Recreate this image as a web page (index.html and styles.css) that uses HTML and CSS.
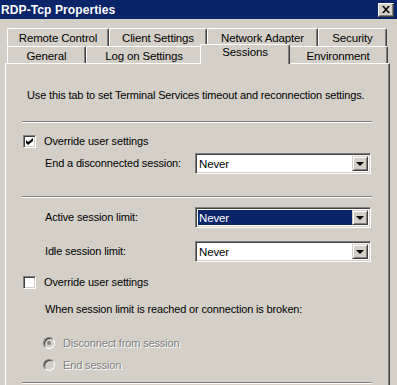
FILE: index.html
```html
<!DOCTYPE html>
<html>
<head>
<meta charset="utf-8">
<link rel="stylesheet" href="styles.css">
</head>
<body>
<div class="window">
  <div class="titlebar">
    <span class="title">RDP-Tcp Properties</span>
    <span class="close"><svg width="8" height="7" viewBox="0 0 8 7"><path d="M0 0h2l2 2.5L6 0h2L5 3.5 8 7H6L4 4.5 2 7H0l3-3.5z" fill="#000"/></svg></span>
  </div>
  <div class="tabs">
    <div class="tabrow row1">
      <div class="tab w-rc">Remote Control</div>
      <div class="tab w-cs">Client Settings</div>
      <div class="tab w-na">Network Adapter</div>
      <div class="tab w-se">Security</div>
    </div>
    <div class="tabrow row2">
      <div class="tab w-ge">General</div>
      <div class="tab w-lo">Log on Settings</div>
      <div class="tab w-ss active">Sessions</div>
      <div class="tab w-en">Environment</div>
    </div>
  </div>
  <div class="panel">
    <p class="intro">Use this tab to set Terminal Services timeout and reconnection settings.</p>
    <div class="sep sep1"></div>
    <div class="check-row cr1">
      <span class="checkbox"><svg width="7" height="7" viewBox="0 0 7 7"><path d="M0 2l2 2 5-4v3l-5 4-2-2z" fill="#000"/></svg></span>
      <span class="label">Override user settings</span>
    </div>
    <div class="field f1">
      <span class="label">End a disconnected session:</span>
      <div class="combo"><span class="value">Never</span><span class="btn"><i class="arrow"></i></span></div>
    </div>
    <div class="sep sep2"></div>
    <div class="field f2">
      <span class="label">Active session limit:</span>
      <div class="combo focused"><span class="value">Never</span><span class="btn"><i class="arrow"></i></span></div>
    </div>
    <div class="field f3">
      <span class="label">Idle session limit:</span>
      <div class="combo"><span class="value">Never</span><span class="btn"><i class="arrow"></i></span></div>
    </div>
    <div class="check-row cr2">
      <span class="checkbox"></span>
      <span class="label">Override user settings</span>
    </div>
    <p class="when">When session limit is reached or connection is broken:</p>
    <div class="radio-row rr1">
      <span class="radio checked"><i class="dot"></i></span>
      <span class="label disabled">Disconnect from session</span>
    </div>
    <div class="radio-row rr2">
      <span class="radio"></span>
      <span class="label disabled">End session</span>
    </div>
    <div class="sep sep3"></div>
  </div>
</div>
</body>
</html>
```
FILE: styles.css
```css
* { box-sizing: border-box; }
html, body { margin: 0; padding: 0; }
body {
  width: 397px;
  height: 385px;
  overflow: hidden;
  background: #d4d0c8;
  font-family: "Liberation Sans", Arial, sans-serif;
  font-size: 11px;
  letter-spacing: -0.15px;
  color: #000;
}
.window { display: flex; flex-direction: column; width: 397px; }
.titlebar {
  height: 19px;
  background: #0a246a;
  display: flex;
  align-items: center;
  justify-content: space-between;
  padding: 0 3px 0 1px;
}
.title { color: #fff; font-weight: bold; font-size: 12px; letter-spacing: 0.1px; }
.close {
  width: 16px; height: 14px;
  background: #d4d0c8;
  border: 1px solid; border-color: #fff #404040 #404040 #fff;
  box-shadow: inset -1px -1px 0 #808080;
  display: flex; align-items: center; justify-content: center;
}
.tabs { margin-top: 9px; padding-left: 7px; display: flex; flex-direction: column; }
.tabrow { display: flex; }
.tab {
  height: 18px;
  display: flex; align-items: center; justify-content: center;
  border-top: 1px solid #fff;
  border-left: 1px solid #fff;
  border-right: 1px solid #404040;
  box-shadow: inset -1px 0 0 #808080;
  border-radius: 2px 2px 0 0;
  padding-top: 1px;
  font-size: 11.5px;
  white-space: nowrap;
}
.row2 .tab { height: 17px; }
.w-rc { width: 102px; }
.w-cs { width: 98px; }
.w-na { width: 111px; }
.w-se { width: 69px; }
.w-ge { width: 79px; }
.w-lo { width: 116px; }
.w-ss { width: 86px; }
.w-en { width: 100px; }
.tab.active {
  height: 20px;
  margin: -2px -2px -1px -2px;
  width: 90px;
  position: relative;
  z-index: 2;
  background: #d4d0c8;
  align-items: flex-start;
  padding-top: 1px;
}
.panel {
  margin-left: 5px;
  width: 385px;
  height: 330px;
  border-top: 1px solid #fff;
  border-left: 1px solid #fff;
  border-right: 1px solid #404040;
  box-shadow: inset -1px 0 0 #808080;
  padding-left: 16px;
  display: flex; flex-direction: column;
}
.intro { margin: 24px 0 0 5px; line-height: 14px; font-size: 11px; white-space: nowrap; }
.sep {
  width: 350px;
  height: 2px;
  border-top: 1px solid #808080;
  border-bottom: 1px solid #fff;
}
.sep1 { margin-top: 19px; }
.check-row { display: flex; align-items: center; gap: 8px; margin-left: 1px; height: 14px; }
.cr1 { margin-top: 11px; }
.cr2 { margin-top: 13px; }
.label { font-size: 11px; line-height: 14px; white-space: nowrap; }
.checkbox {
  width: 13px; height: 13px;
  background: #fff;
  border: 1px solid; border-color: #808080 #fff #fff #808080;
  box-shadow: inset 1px 1px 0 #404040, inset -1px -1px 0 #d4d0c8;
  display: flex; align-items: center; justify-content: center;
}
.field { display: grid; grid-template-columns: 150px 176px; align-items: center; margin-left: 23px; }
.f1 { margin-top: 5px; }
.f1 .label, .f2 .label, .f3 .label { margin-top: -2px; }
.f2 { margin-top: 9px; }
.f3 { margin-top: 13px; }
.sep2 { margin-top: 22px; }
.combo {
  height: 21px;
  background: #fff;
  border: 1px solid; border-color: #808080 #fff #fff #808080;
  box-shadow: inset 1px 1px 0 #404040, inset -1px -1px 0 #d4d0c8;
  display: flex; padding: 2px;
}
.combo .value { flex: 1; padding-left: 1px; display: flex; align-items: center; font-size: 11.5px; }
.combo.focused .value { background: #0a246a; color: #fff; }
.combo .btn {
  width: 16px;
  background: #d4d0c8;
  border: 1px solid; border-color: #d4d0c8 #404040 #404040 #d4d0c8;
  box-shadow: inset 1px 1px 0 #fff, inset -1px -1px 0 #808080;
  display: flex; align-items: center; justify-content: center;
}
.arrow {
  width: 0; height: 0;
  border-left: 4px solid transparent;
  border-right: 4px solid transparent;
  border-top: 4px solid #000;
}
.when { margin: 13px 0 0 23px; line-height: 14px; font-size: 11px; white-space: nowrap; }
.radio-row { display: flex; align-items: center; gap: 8px; margin-left: 21px; height: 14px; }
.rr1 { margin-top: 20px; }
.rr2 { margin-top: 8px; }
.radio {
  width: 12px; height: 12px; border-radius: 50%;
  background: #d4d0c8;
  border: 1px solid; border-color: #808080 #fff #fff #808080;
  box-shadow: inset 1px 1px 0 #404040;
  display: flex; align-items: center; justify-content: center;
}
.dot { width: 4px; height: 4px; border-radius: 50%; background: #808080; }
.disabled { color: #808080; text-shadow: 1px 1px 0 #fff; }
.sep3 { margin-top: 10px; }
```
